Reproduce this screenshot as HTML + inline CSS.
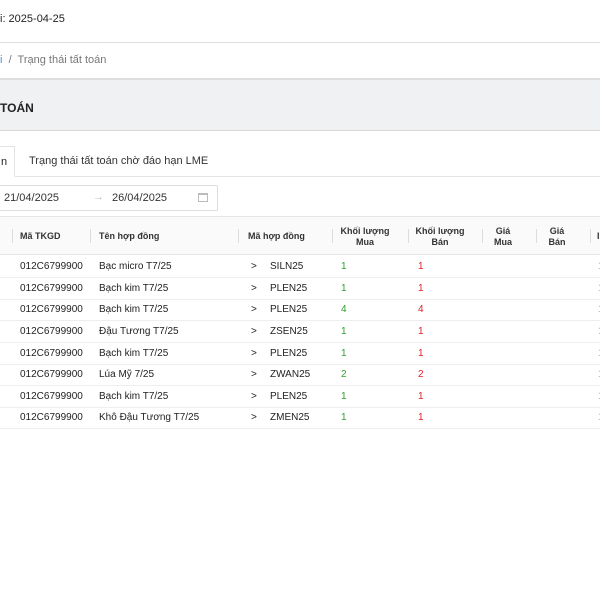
<!DOCTYPE html>
<html><head><meta charset="utf-8"><style>
*{margin:0;padding:0;box-sizing:border-box}
body{width:600px;height:600px;overflow:hidden;background:#fff;font-family:"Liberation Sans","DejaVu Sans",sans-serif;color:#222;position:relative}
.a{position:absolute;white-space:nowrap}
.row{position:absolute;left:0;width:600px;height:22px;border-bottom:1px solid #eee;font-size:10px}
.row span{position:absolute;top:5px}
.g{color:#2ea02e}.r{color:#e0202a}.y{color:#d4b800}
.sep{position:absolute;top:229px;width:1px;height:14px;background:#ddd}
.h{position:absolute;font-size:9px;font-weight:bold;text-align:center;line-height:11px;color:#333}
</style></head><body>
<div class="a" style="left:0;top:13px;font-size:11px">i: 2025-04-25</div>
<div class="a" style="left:0;top:42px;width:600px;height:1px;background:#ddd"></div>
<div class="a" style="left:0;top:54px;font-size:11px;color:#777"><span style="color:#4a90e2">i</span>&nbsp; /&nbsp; Trạng thái tất toán</div>
<div class="a" style="left:0;top:78px;width:600px;height:53px;background:#f0f1f3;border-top:2px solid #ddd;border-bottom:1px solid #d8d8d8"></div>
<div class="a" style="left:0;top:101px;font-size:12px;font-weight:bold">TOÁN</div>
<div class="a" style="left:0;top:176px;width:600px;height:1px;background:#e3e3e3"></div>
<div class="a" style="left:-5px;top:146px;width:20px;height:31px;border:1px solid #e3e3e3;border-bottom:1px solid #fff;background:#fff;font-size:11px;padding:9px 0 0 5px">n</div>
<div class="a" style="left:29px;top:155px;font-size:11px;color:#333">Trạng thái tất toán chờ đáo hạn LME</div>
<div class="a" style="left:-5px;top:185px;width:223px;height:26px;border:1px solid #ddd;border-radius:2px"></div>
<div class="a" style="left:4px;top:192px;font-size:11px;color:#333">21/04/2025</div>
<div class="a" style="left:93px;top:191px;font-size:11px;color:#bbb">→</div>
<div class="a" style="left:112px;top:192px;font-size:11px;color:#333">26/04/2025</div>
<div class="a" style="left:198px;top:193px;width:10px;height:9px;border:1px solid #bbb;border-top-width:2px"></div>
<div class="a" style="left:0;top:216px;width:600px;height:39px;background:#fafafa;border-top:1px solid #e6e6e6;border-bottom:1px solid #e6e6e6"></div>
<div class="sep" style="left:12px"></div><div class="sep" style="left:90px"></div><div class="sep" style="left:238px"></div><div class="sep" style="left:332px"></div><div class="sep" style="left:408px"></div><div class="sep" style="left:482px"></div><div class="sep" style="left:536px"></div><div class="sep" style="left:590px"></div>
<div class="h" style="left:20px;top:231px">Mã TKGD</div>
<div class="h" style="left:99px;top:231px">Tên hợp đồng</div>
<div class="h" style="left:248px;top:231px">Mã hợp đồng</div>
<div class="h" style="left:335px;top:226px;width:60px">Khối lượng<br>Mua</div>
<div class="h" style="left:410px;top:226px;width:60px">Khối lượng<br>Bán</div>
<div class="h" style="left:485px;top:226px;width:36px">Giá<br>Mua</div>
<div class="h" style="left:539px;top:226px;width:36px">Giá<br>Bán</div>
<div class="h" style="left:597px;top:231px">I</div>
<div class="row" style="top:256px"><span style="left:20px">012C6799900</span><span style="left:99px">Bạc micro T7/25</span><span style="left:251px">&gt;</span><span style="left:270px">SILN25</span><span class="g" style="left:341px">1</span><span class="r" style="left:418px">1</span><span class="y" style="left:598px">1</span></div>
<div class="row" style="top:278px"><span style="left:20px">012C6799900</span><span style="left:99px">Bạch kim T7/25</span><span style="left:251px">&gt;</span><span style="left:270px">PLEN25</span><span class="g" style="left:341px">1</span><span class="r" style="left:418px">1</span><span class="y" style="left:598px">1</span></div>
<div class="row" style="top:299px"><span style="left:20px">012C6799900</span><span style="left:99px">Bạch kim T7/25</span><span style="left:251px">&gt;</span><span style="left:270px">PLEN25</span><span class="g" style="left:341px">4</span><span class="r" style="left:418px">4</span><span class="y" style="left:598px">1</span></div>
<div class="row" style="top:321px"><span style="left:20px">012C6799900</span><span style="left:99px">Đậu Tương T7/25</span><span style="left:251px">&gt;</span><span style="left:270px">ZSEN25</span><span class="g" style="left:341px">1</span><span class="r" style="left:418px">1</span><span class="y" style="left:598px">1</span></div>
<div class="row" style="top:343px"><span style="left:20px">012C6799900</span><span style="left:99px">Bạch kim T7/25</span><span style="left:251px">&gt;</span><span style="left:270px">PLEN25</span><span class="g" style="left:341px">1</span><span class="r" style="left:418px">1</span><span class="y" style="left:598px">1</span></div>
<div class="row" style="top:364px"><span style="left:20px">012C6799900</span><span style="left:99px">Lúa Mỹ 7/25</span><span style="left:251px">&gt;</span><span style="left:270px">ZWAN25</span><span class="g" style="left:341px">2</span><span class="r" style="left:418px">2</span><span class="y" style="left:598px">1</span></div>
<div class="row" style="top:386px"><span style="left:20px">012C6799900</span><span style="left:99px">Bạch kim T7/25</span><span style="left:251px">&gt;</span><span style="left:270px">PLEN25</span><span class="g" style="left:341px">1</span><span class="r" style="left:418px">1</span><span class="y" style="left:598px">1</span></div>
<div class="row" style="top:407px"><span style="left:20px">012C6799900</span><span style="left:99px">Khô Đậu Tương T7/25</span><span style="left:251px">&gt;</span><span style="left:270px">ZMEN25</span><span class="g" style="left:341px">1</span><span class="r" style="left:418px">1</span><span class="y" style="left:598px">1</span></div>
</body></html>
